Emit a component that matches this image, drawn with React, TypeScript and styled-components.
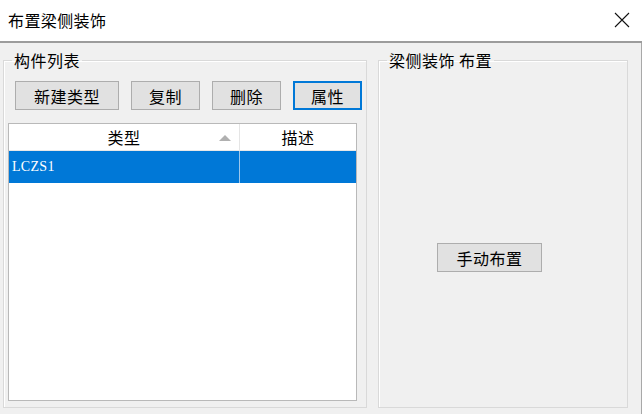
import React from "react";
import styled, { createGlobalStyle, css } from "styled-components";

const Global = createGlobalStyle`
  html, body { margin: 0; padding: 0; background: #f0f0f0; }
  body { font-family: "Noto Sans CJK SC", "Noto Sans", sans-serif; }
  * { box-sizing: border-box; }
`;

const Window = styled.div`
  width: 642px;
  height: 414px;
  display: flex;
  flex-direction: column;
  background: #f0f0f0;
  overflow: hidden;
`;

const TitleBar = styled.div`
  height: 43px;
  flex: none;
  background: #ffffff;
  border-bottom: 2px solid #9c9c9c;
  display: flex;
  align-items: center;
  justify-content: space-between;
  padding: 0 11px 0 8px;
`;

const Title = styled.div`
  font-size: 16px;
  letter-spacing: 0.4px;
  color: #000;
  margin-top: -2px;
`;

const CloseButton = styled.div`
  width: 18px;
  height: 18px;
  display: flex;
  align-items: center;
  justify-content: center;
  margin-top: -2px;
`;

const Body = styled.div`
  flex: 1;
  display: flex;
  gap: 11px;
  padding: 5px 13px 6px 3px;
  border-right: 1px solid #a8a8a8;
`;

const Group = styled.fieldset<{ $width: number }>`
  margin: 0;
  padding: 0;
  min-width: 0;
  width: ${(p) => p.$width}px;
  border: 1px solid #d9d9d9;
  box-shadow: inset 1px 1px 0 #ffffff;
  display: flex;
  flex-direction: column;
`;

const Legend = styled.legend`
  margin-left: 8px;
  padding: 0 2px;
  font-size: 16px;
  letter-spacing: 0.5px;
  line-height: 24px;
  height: 24px;
  color: #000;
`;

const ButtonRow = styled.div`
  display: flex;
  gap: 12px;
  padding: 9px 0 0 11px;
`;

const Button = styled.div<{ $width: number; $focused?: boolean }>`
  width: ${(p) => p.$width}px;
  height: 29px;
  background: #e1e1e1;
  border: 1px solid #adadad;
  display: flex;
  align-items: center;
  justify-content: center;
  font-size: 16px;
  letter-spacing: 0.5px;
  color: #000;
  ${(p) =>
    p.$focused &&
    css`
      border: 2px solid #0078d7;
    `}
`;

const ListView = styled.div`
  flex: 1;
  margin: 13px 9px 6px 4px;
  background: #ffffff;
  border: 1px solid #b9b9b9;
  display: flex;
  flex-direction: column;
`;

const HeaderRow = styled.div`
  height: 27px;
  display: grid;
  grid-template-columns: 231px 1fr;
  border-bottom: 1px solid #e8e8e8;
`;

const HeaderCell = styled.div<{ $divider?: boolean }>`
  position: relative;
  display: flex;
  align-items: center;
  justify-content: center;
  font-size: 16px;
  letter-spacing: 0.5px;
  color: #000;
  ${(p) => p.$divider && css`border-right: 1px solid #e5e5e5;`}
`;

const SortArrow = styled.div`
  position: absolute;
  right: 8px;
  top: 11px;
  width: 0;
  height: 0;
  border-left: 6px solid transparent;
  border-right: 6px solid transparent;
  border-bottom: 6px solid #b0b0b0;
`;

const DataRow = styled.div<{ $selected?: boolean }>`
  height: 32px;
  display: grid;
  grid-template-columns: 231px 1fr;
  background: ${(p) => (p.$selected ? "#0078d7" : "transparent")};
  color: ${(p) => (p.$selected ? "#ffffff" : "#000")};
`;

const DataCell = styled.div<{ $divider?: boolean }>`
  display: flex;
  align-items: center;
  padding-left: 3px;
  font-family: "Liberation Serif", "Noto Serif CJK SC", serif;
  font-size: 14px;
  letter-spacing: 0.3px;
  ${(p) => p.$divider && css`border-right: 1px solid #9cc7ec;`}
`;

const PlaceArea = styled.div`
  flex: 1;
  padding: 171px 0 0 58px;
`;

export default function App() {
  return (
    <>
      <Global />
      <Window>
        <TitleBar>
          <Title>布置梁侧装饰</Title>
          <CloseButton>
            <svg width="16" height="16" viewBox="0 0 16 16">
              <path d="M1 1 L15 15 M15 1 L1 15" stroke="#111" strokeWidth="1.1" fill="none" />
            </svg>
          </CloseButton>
        </TitleBar>
        <Body>
          <Group $width={364}>
            <Legend>构件列表</Legend>
            <ButtonRow>
              <Button $width={104}>新建类型</Button>
              <Button $width={69}>复制</Button>
              <Button $width={69}>删除</Button>
              <Button $width={69} $focused>属性</Button>
            </ButtonRow>
            <ListView>
              <HeaderRow>
                <HeaderCell $divider>
                  类型
                  <SortArrow />
                </HeaderCell>
                <HeaderCell>描述</HeaderCell>
              </HeaderRow>
              <DataRow $selected>
                <DataCell $divider>LCZS1</DataCell>
                <DataCell />
              </DataRow>
            </ListView>
          </Group>
          <Group $width={250}>
            <Legend>梁侧装饰 布置</Legend>
            <PlaceArea>
              <Button $width={105}>手动布置</Button>
            </PlaceArea>
          </Group>
        </Body>
      </Window>
    </>
  );
}
